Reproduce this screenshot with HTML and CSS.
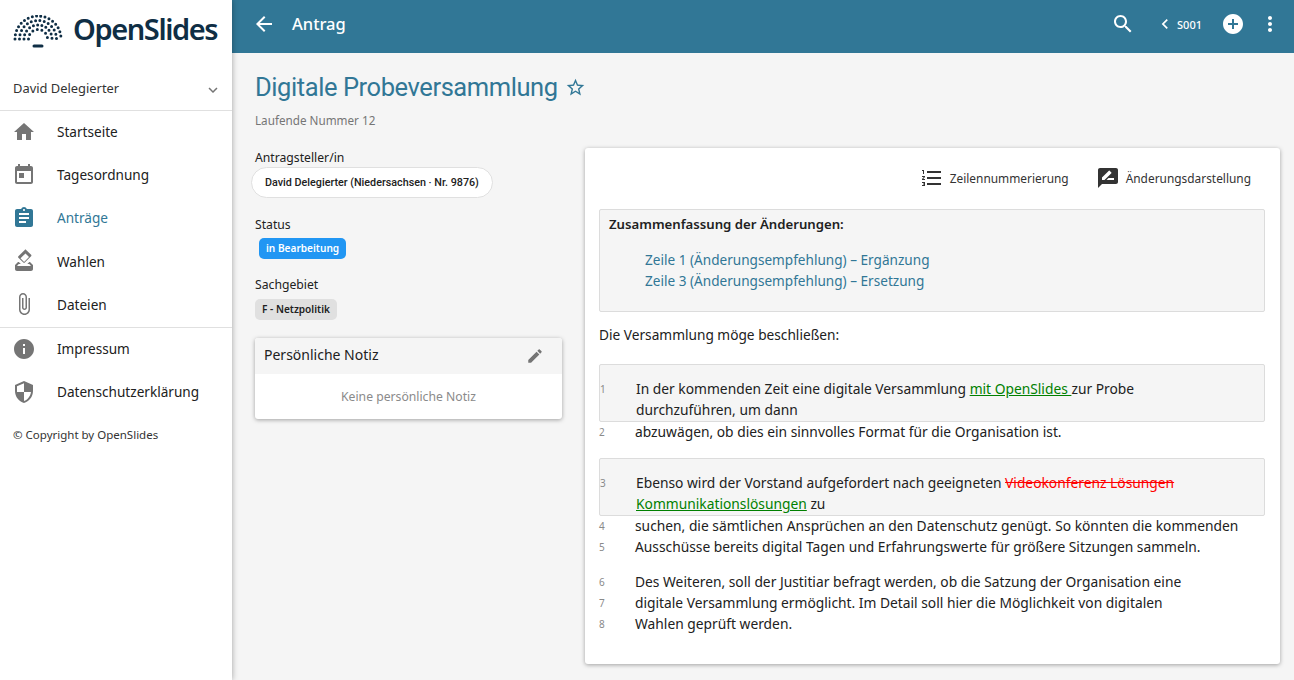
FILE: index.html
```html
<!DOCTYPE html>
<html lang="de">
<head>
    <meta charset="UTF-8">
    <meta name="viewport" content="width=device-width, initial-scale=1.0">
    <title>OpenSlides - Antrag</title>
    <link rel="stylesheet" href="styles.css">
</head>
<body>
    <div class="app">
        <aside class="sidebar">
            <div class="logo">
                <svg class="logo-dome" width="50" height="34" viewBox="0 0 50 34">
                    <g fill="none" stroke="#0f2e45" stroke-width="3" stroke-linecap="round">
                        <path stroke-dasharray="0 4.3" d="M2 24A23 23 0 0 1 48 24"/>
                        <path stroke-dasharray="0 4.4" d="M6.5 24A18.500 18.500 0 0 1 43.500 24"/>
                        <path stroke-dasharray="0 4.3" d="M11 24A14 14 0 0 1 39 24"/>
                        <path stroke-dasharray="0 4.7" d="M15.500 24A9.500 9.500 0 0 1 34.500 24"/>
                        <path d="M21 31h8" stroke-dasharray="none"/>
                    </g>
                </svg>
                <span class="logo-text">OpenSlides</span>
            </div>
            <div class="user-row">
                <span>David Delegierter</span>
                <svg class="icon icon-18" viewBox="0 0 24 24"><path d="M16.590 8.590L12 13.170 7.410 8.590 6 10l6 6 6-6z"/></svg>
            </div>
            <nav class="nav-group">
                <a class="nav-item">
                    <svg class="icon" viewBox="0 0 24 24"><path d="M10 20v-6h4v6h5v-8h3L12 3 2 12h3v8z"/></svg>
                    <span>Startseite</span>
                </a>
                <a class="nav-item">
                    <svg class="icon" viewBox="0 0 24 24"><path d="M19 3h-1V1h-2v2H8V1H6v2H5c-1.110 0-1.990.9-1.990 2L3 19c0 1.100.89 2 2 2h14c1.100 0 2-.9 2-2V5c0-1.100-.9-2-2-2zm0 16H5V8h14v11zM7 10h5v5H7z"/></svg>
                    <span>Tagesordnung</span>
                </a>
                <a class="nav-item active">
                    <svg class="icon" viewBox="0 0 24 24"><path d="M19 3h-4.180C14.400 1.840 13.300 1 12 1c-1.300 0-2.400.84-2.820 2H5c-1.100 0-2 .9-2 2v14c0 1.100.9 2 2 2h14c1.100 0 2-.9 2-2V5c0-1.100-.9-2-2-2zm-7 0c.55 0 1 .45 1 1s-.45 1-1 1-1-.45-1-1 .45-1 1-1zm2 14H7v-2h7v2zm3-4H7v-2h10v2zm0-4H7V7h10v2z"/></svg>
                    <span>Anträge</span>
                </a>
                <a class="nav-item">
                    <svg class="icon" viewBox="0 0 24 24"><path d="M18 13h-.68l-2 2h1.910L19 17H5l1.780-2h2.050l-2-2H6l-3 3v4c0 1.100.89 2 1.990 2H19c1.100 0 2-.89 2-2v-4l-3-3zm-1-5.050l-4.950 4.950-3.540-3.540 4.950-4.950L17 7.950zm-4.240-7.070L6.390 7.250c-.39.39-.39 1.020 0 1.410l4.950 4.950c.39.39 1.020.39 1.410 0l6.360-6.360c.39-.39.39-1.020 0-1.410L14.160.88c-.38-.4-1.010-.4-1.400 0z"/></svg>
                    <span>Wahlen</span>
                </a>
                <a class="nav-item">
                    <svg class="icon" viewBox="0 0 24 24"><path d="M16.500 6v11.500c0 2.210-1.790 4-4 4s-4-1.790-4-4V5c0-1.380 1.120-2.500 2.500-2.500s2.500 1.120 2.500 2.500v10.500c0 .55-.45 1-1 1s-1-.45-1-1V6H10v9.500c0 1.380 1.120 2.500 2.500 2.500s2.500-1.120 2.500-2.500V5c0-2.210-1.790-4-4-4S7 2.790 7 5v12.500c0 3.040 2.460 5.500 5.500 5.500s5.500-2.460 5.500-5.500V6h-1.500z"/></svg>
                    <span>Dateien</span>
                </a>
            </nav>
            <nav class="nav-group">
                <a class="nav-item">
                    <svg class="icon" viewBox="0 0 24 24"><path d="M12 2C6.480 2 2 6.480 2 12s4.480 10 10 10 10-4.480 10-10S17.520 2 12 2zm1 15h-2v-6h2v6zm0-8h-2V7h2v2z"/></svg>
                    <span>Impressum</span>
                </a>
                <a class="nav-item">
                    <svg class="icon" viewBox="0 0 24 24"><path d="M12 1L3 5v6c0 5.550 3.840 10.740 9 12 5.160-1.260 9-6.450 9-12V5l-9-4zm0 10.990h7c-.53 4.120-3.280 7.790-7 8.940V12H5V6.300l7-3.110v8.800z"/></svg>
                    <span>Datenschutzerklärung</span>
                </a>
            </nav>
            <div class="copyright">© Copyright by OpenSlides</div>
        </aside>

        <div class="main">
            <header class="toolbar">
                <svg class="icon icon-white" viewBox="0 0 24 24"><path d="M20 11H7.830l5.590-5.590L12 4l-8 8 8 8 1.410-1.410L7.830 13H20v-2z"/></svg>
                <span class="toolbar-title">Antrag</span>
                <div class="toolbar-right">
                    <svg class="icon icon-white" viewBox="0 0 24 24"><path d="M15.500 14h-.79l-.28-.27C15.410 12.590 16 11.110 16 9.500 16 5.910 13.090 3 9.500 3S3 5.910 3 9.500 5.910 16 9.500 16c1.610 0 3.090-.59 4.230-1.570l.27.28v.79l5 4.990L20.490 19l-4.990-5zm-6 0C7.010 14 5 11.990 5 9.500S7.010 5 9.500 5 14 7.010 14 9.500 11.990 14 9.500 14z"/></svg>
                    <div class="prev-link">
                        <svg class="icon icon-white icon-chevron" viewBox="0 0 24 24"><path d="M15.410 7.410L14 6l-6 6 6 6 1.410-1.410L10.830 12z"/></svg>
                        <span>S001</span>
                    </div>
                    <svg class="icon icon-white icon-add" viewBox="0 0 24 24"><path d="M12 2C6.480 2 2 6.480 2 12s4.480 10 10 10 10-4.480 10-10S17.520 2 12 2zm5 11h-4v4h-2v-4H7v-2h4V7h2v4h4v2z"/></svg>
                    <svg class="icon icon-white" viewBox="0 0 24 24"><path d="M12 8c1.100 0 2-.9 2-2s-.9-2-2-2-2 .9-2 2 .9 2 2 2zm0 2c-1.100 0-2 .9-2 2s.9 2 2 2 2-.9 2-2-.9-2-2-2zm0 6c-1.100 0-2 .9-2 2s.9 2 2 2 2-.9 2-2-.9-2-2-2z"/></svg>
                </div>
            </header>

            <div class="content">
                <div class="title-row">
                    <h1>Digitale Probeversammlung</h1>
                    <svg class="icon icon-star" viewBox="0 0 24 24"><path d="M22 9.240l-7.190-.62L12 2 9.190 8.630 2 9.240l5.460 4.730L5.820 21 12 17.270 18.180 21l-1.630-7.030L22 9.240zM12 15.400l-3.760 2.270 1-4.280-3.320-2.880 4.380-.38L12 6.100l1.710 4.040 4.380.38-3.320 2.880 1 4.280L12 15.400z"/></svg>
                </div>
                <div class="subtitle">Laufende Nummer 12</div>

                <div class="columns">
                    <div class="meta">
                        <div class="meta-label">Antragsteller/in</div>
                        <div class="chip-user">David Delegierter (Niedersachsen · Nr. 9876)</div>
                        <div class="meta-label label-status">Status</div>
                        <div class="chip chip-state">in Bearbeitung</div>
                        <div class="meta-label label-category">Sachgebiet</div>
                        <div class="chip chip-category">F - Netzpolitik</div>
                        <div class="note-card">
                            <div class="note-head">
                                <span>Persönliche Notiz</span>
                                <svg class="icon icon-18" viewBox="0 0 24 24"><path d="M3 17.250V21h3.750L17.810 9.940l-3.750-3.750L3 17.250zM20.710 7.040c.39-.39.39-1.020 0-1.410l-2.340-2.340c-.39-.39-1.020-.39-1.410 0l-1.830 1.830 3.750 3.750 1.830-1.830z"/></svg>
                            </div>
                            <div class="note-body">Keine persönliche Notiz</div>
                        </div>
                    </div>

                    <div class="text-card">
                        <div class="card-actions">
                            <div class="action">
                                <svg class="icon icon-dark" viewBox="0 0 24 24"><path d="M2 17h2v.5H3v1h1v.5H2v1h3v-4H2v1zm1-9h1V4H2v1h1v3zm-1 3h1.800L2 13.100v.9h3v-1H3.200L5 10.900V10H2v1zm5-6v2h14V5H7zm0 14h14v-2H7v2zm0-6h14v-2H7v2z"/></svg>
                                <span>Zeilennummerierung</span>
                            </div>
                            <div class="action">
                                <svg class="icon icon-dark" viewBox="0 0 24 24"><path d="M20 2H4c-1.100 0-1.990.9-1.990 2L2 22l4-4h14c1.100 0 2-.9 2-2V4c0-1.100-.9-2-2-2zM6 14v-2.470l6.880-6.880c.2-.2.51-.2.71 0l1.770 1.770c.2.2.2.51 0 .71L8.470 14H6zm12 0h-7.500l2-2H18v2z"/></svg>
                                <span>Änderungsdarstellung</span>
                            </div>
                        </div>

                        <div class="summary">
                            <strong>Zusammenfassung der Änderungen:</strong>
                            <ul>
                                <li><a>Zeile 1 (Änderungsempfehlung) – Ergänzung</a></li>
                                <li><a>Zeile 3 (Änderungsempfehlung) – Ersetzung</a></li>
                            </ul>
                        </div>

                        <p class="preamble">Die Versammlung möge beschließen:</p>

                        <div class="change">
                            <div class="line"><span class="ln">1</span>In der kommenden Zeit eine digitale Versammlung <ins>mit OpenSlides </ins>zur Probe</div>
                            <div class="line">durchzuführen, um dann</div>
                        </div>
                        <div class="line"><span class="ln">2</span>abzuwägen, ob dies ein sinnvolles Format für die Organisation ist.</div>

                        <div class="change change-2">
                            <div class="line"><span class="ln">3</span>Ebenso wird der Vorstand aufgefordert nach geeigneten <del>Videokonferenz Lösungen</del></div>
                            <div class="line"><ins>Kommunikationslösungen</ins> zu</div>
                        </div>
                        <div class="line"><span class="ln">4</span>suchen, die sämtlichen Ansprüchen an den Datenschutz genügt. So könnten die kommenden</div>
                        <div class="line"><span class="ln">5</span>Ausschüsse bereits digital Tagen und Erfahrungswerte für größere Sitzungen sammeln.</div>

                        <div class="para">
                            <div class="line"><span class="ln">6</span>Des Weiteren, soll der Justitiar befragt werden, ob die Satzung der Organisation eine</div>
                            <div class="line"><span class="ln">7</span>digitale Versammlung ermöglicht. Im Detail soll hier die Möglichkeit von digitalen</div>
                            <div class="line"><span class="ln">8</span>Wahlen geprüft werden.</div>
                        </div>
                    </div>
                </div>
            </div>
        </div>
    </div>
</body>
</html>
```

FILE: styles.css
```css
* {
    box-sizing: border-box;
}
body {
    font-family: 'Noto Sans', 'Open Sans', sans-serif;
    font-size: 13.8px;
    margin: 0;
    background-color: #f5f5f5;
    color: #212121;
    overflow: hidden;
}
.app {
    display: flex;
    height: 680px;
}
.icon {
    width: 24px;
    height: 24px;
    fill: #757575;
    flex-shrink: 0;
}
.icon-18 {
    width: 18px;
    height: 18px;
}
.icon-white {
    fill: #fff;
}
.icon-dark {
    fill: #333;
}

/* sidebar */
.sidebar {
    width: 232px;
    flex-shrink: 0;
    background-color: #fff;
    box-shadow: 0 0 6px rgba(0, 0, 0, 0.35);
    position: relative;
    z-index: 2;
}
.logo {
    display: flex;
    align-items: center;
    height: 68px;
    padding: 0 0 8px 13px;
}
.logo-dome {
    margin-top: 3px;
}
.logo-text {
    font-family: 'Noto Sans', sans-serif;
    font-size: 29px;
    font-weight: 600;
    letter-spacing: -1.4px;
    color: #0f2e45;
    margin: 0 0 3px 10px;
}
.user-row {
    display: flex;
    justify-content: space-between;
    align-items: center;
    height: 42px;
    padding: 0 10px 0 13px;
    font-size: 12.9px;
    color: #333;
}
.user-row span {
    margin-bottom: 3px;
}
.user-row .icon {
    margin-top: 1px;
}
.nav-group {
    border-top: 1px solid #e0e0e0;
}
.nav-item {
    display: flex;
    align-items: center;
    height: 43.2px;
    padding: 0 0 2px 12px;
    font-size: 13.6px;
    color: #212121;
}
.nav-item span {
    margin-left: 21px;
}
.nav-item.active,
.nav-item.active .icon {
    color: #317796;
    fill: #317796;
}
.copyright {
    padding: 13px 13px;
    font-size: 11.5px;
    color: #333;
}

/* toolbar */
.main {
    flex: 1;
    min-width: 0;
}
.toolbar {
    display: flex;
    align-items: center;
    height: 53px;
    padding: 0 12px 5px 20px;
    background-color: #317796;
    color: #fff;
}
.toolbar-title {
    font-size: 16.5px;
    font-weight: 500;
    margin: 0 0 2px 16px;
}
.toolbar-right {
    display: flex;
    align-items: center;
    margin-left: auto;
}
.prev-link {
    display: flex;
    align-items: center;
    font-size: 11px;
    font-weight: 500;
    margin: 0 19px 0 20px;
}
.prev-link span {
    margin-left: 2px;
}
.icon-chevron {
    width: 20px;
    height: 20px;
}
.icon-add {
    margin-right: 13px;
}

/* content */
.content {
    padding: 0 14px 0 23px;
}
.title-row {
    display: flex;
    align-items: center;
    height: 34px;
    margin-top: 17px;
}
h1 {
    margin: 0;
    font-family: Roboto, 'Noto Sans', sans-serif;
    font-size: 25.5px;
    font-weight: 400;
    letter-spacing: -0.42px;
    color: #317796;
}
.icon-star {
    width: 21px;
    height: 21px;
    fill: #317796;
    margin-left: 7px;
}
.subtitle {
    margin-top: 8px;
    font-size: 11.7px;
    color: #757575;
}
.columns {
    display: flex;
    align-items: flex-start;
    margin-top: 20px;
}

/* left column */
.meta {
    width: 307px;
    margin-right: 23px;
    padding-top: 2px;
}
.meta-label {
    font-size: 12.2px;
    line-height: 16px;
}
.label-status {
    margin-top: 19px;
}
.label-category {
    margin-top: 18px;
}
.chip-user {
    width: 242px;
    height: 31px;
    margin: 1px 0 0 -4px;
    border: 1px solid #e0e0e0;
    border-radius: 16px;
    background-color: #fff;
    font-family: Roboto, sans-serif;
    font-size: 10.75px;
    font-weight: 500;
    line-height: 29px;
    padding-left: 13px;
    white-space: nowrap;
}
.chip {
    display: inline-block;
    height: 21px;
    border-radius: 5px;
    font-size: 10.1px;
    font-weight: 600;
    line-height: 21px;
    padding: 0 7px;
}
.chip-state {
    margin: 5px 0 0 4px;
    background-color: #2196f3;
    color: #fff;
}
.chip-category {
    margin-top: 6px;
    background-color: #e0e0e0;
}
.note-card {
    height: 81px;
    margin-top: 18px;
    border-radius: 3px;
    background-color: #fff;
    box-shadow: 0 1px 4px rgba(0, 0, 0, 0.35);
    overflow: hidden;
}
.note-head {
    display: flex;
    justify-content: space-between;
    align-items: center;
    height: 36px;
    padding: 0 18px 0 9px;
    background-color: #f5f5f5;
    font-size: 14px;
}
.note-head span {
    margin-bottom: 4px;
}
.note-body {
    padding-top: 14px;
    text-align: center;
    font-size: 12.2px;
    color: #8a8a8a;
}

/* right card */
.text-card {
    flex: 1;
    height: 516px;
    padding: 0 15px 0 14px;
    border-radius: 3px;
    background-color: #fff;
    box-shadow: 0 1px 4px rgba(0, 0, 0, 0.35);
}
.card-actions {
    display: flex;
    justify-content: flex-end;
    height: 61px;
    padding: 18px 14px 0 0;
    gap: 27px;
}
.action {
    display: flex;
    align-items: center;
    height: 24px;
    font-size: 11.9px;
    color: #333;
}
.action span {
    margin-left: 6px;
}
.summary {
    height: 103px;
    padding: 4px 9px;
    background-color: #f5f5f5;
    border: 1px solid #dcdcdc;
    border-radius: 2px;
}
.summary strong {
    font-size: 13.2px;
    font-weight: 600;
}
.summary ul {
    list-style: none;
    margin: 16px 0 0;
    padding-left: 36px;
    font-size: 13.6px;
}
.summary li {
    line-height: 21px;
}
.summary a {
    color: #317796;
}
.preamble {
    margin: 12px 0 0;
    font-size: 13.7px;
    line-height: 21px;
}
.change {
    height: 58px;
    margin-top: 19px;
    padding-top: 13px;
    background-color: #f5f5f5;
    border: 1px solid #dcdcdc;
    border-radius: 2px;
}
.change + .line {
    margin-top: -1px;
}
.change-2 {
    margin-top: 16px;
}
.line {
    position: relative;
    height: 21px;
    line-height: 21px;
    padding-left: 36px;
    white-space: nowrap;
}
.ln {
    position: absolute;
    left: 0;
    top: 1px;
    font-size: 10px;
    color: #8a8a8a;
}
.para {
    margin-top: 14px;
}
ins {
    color: #008000;
    text-decoration: underline;
}
del {
    color: #f00;
    text-decoration: line-through;
}
```
